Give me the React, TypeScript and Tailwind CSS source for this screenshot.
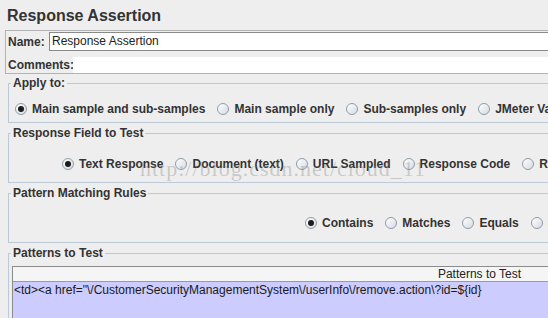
import type { ReactNode } from 'react';

const Radio = ({ checked }: { checked?: boolean }) => (
  <span className="w-[12px] h-[12px] rounded-full border border-[#8e9cab] bg-linear-to-br from-white to-[#d6dbe1] flex items-center justify-center shrink-0">
    {checked && <span className="w-[6px] h-[6px] rounded-full bg-[#1c1c1c]" />}
  </span>
);

const Option = ({ label, checked }: { label: string; checked?: boolean }) => (
  <label className="flex items-center gap-[5px] whitespace-nowrap">
    <Radio checked={checked} />
    <span>{label}</span>
  </label>
);

const Group = ({ title, className, children }: { title: string; className: string; children: ReactNode }) => (
  <fieldset className="ml-[8px] w-[950px] border border-[#bccad8]">
    <legend className="ml-[2px] px-[2px] text-[12px] leading-[14px] font-bold">{title}</legend>
    <div className={className}>{children}</div>
  </fieldset>
);

const App = () => {
  return (
    <div className="relative w-[548px] h-[318px] overflow-hidden bg-[#eeeeee] text-[#333333] font-['Liberation_Sans',Arial,sans-serif]">
      {/* header */}
      <div className="h-[30px] pl-[7px] pt-[6px] text-[16px] leading-[20px] font-bold">Response Assertion</div>

      {/* name / comments */}
      <div className="ml-[5px] w-[960px] border border-[#b3b3b3] pt-[1px] pl-[2px] text-[12px] font-bold">
        <div className="flex items-center h-[19px]">
          <span className="w-[41px]">Name:</span>
          <div className="flex-1 h-[19px] border border-[#8a8a8a] bg-white pl-[2px] leading-[17px] font-normal text-[#222]">
            Response Assertion
          </div>
        </div>
        <div className="flex items-center h-[16px] mt-[6px]">
          <span className="w-[65px]">Comments:</span>
          <div className="flex-1 h-[16px] bg-white" />
        </div>
      </div>

      <div className="mt-[2px] flex flex-col gap-[3px] text-[12px] font-bold">
        <Group title="Apply to:" className="pt-[12px] pb-[6px] pl-[6px]">
          <div className="flex items-center h-[14px] gap-[12px]">
            <Option label="Main sample and sub-samples" checked />
            <Option label="Main sample only" />
            <Option label="Sub-samples only" />
            <Option label="JMeter Variable" />
          </div>
        </Group>

        <Group title="Response Field to Test" className="pt-[17px] pb-[11px] pl-[53px]">
          <div className="flex items-center h-[14px] gap-[12px]">
            <Option label="Text Response" checked />
            <Option label="Document (text)" />
            <Option label="URL Sampled" />
            <Option label="Response Code" />
            <Option label="Response Message" />
          </div>
        </Group>

        <Group title="Pattern Matching Rules" className="pt-[16px] pb-[12px] pl-[296px]">
          <div className="flex items-center h-[14px] gap-[12px]">
            <Option label="Contains" checked />
            <Option label="Matches" />
            <Option label="Equals" />
            <Option label="Substring" />
            <Option label="Not" />
          </div>
        </Group>

        <Group title="Patterns to Test" className="pt-[6px] pl-[3px] h-[80px]">
          <div className="w-[935px] border border-[#8c8c8c] font-normal">
            <div className="h-[15px] bg-[#f5f5f5] border-b border-[#9a9a9a] text-center leading-[15px] text-[#222]">
              Patterns to Test
            </div>
            <div className="h-[60px] bg-[#ccccff] pl-[1px] pt-[1px] leading-[14px] text-[#1a1a1a] whitespace-nowrap">
              {'<td><a href="\\/CustomerSecurityManagementSystem\\/userInfo\\/remove.action\\?id=${id}'}
            </div>
          </div>
        </Group>
      </div>

      {/* blog watermark */}
      <div className="absolute left-[140px] top-[158px] z-10 pointer-events-none text-[22px] leading-[22px] tracking-[1px] text-[rgba(130,130,130,0.35)] font-['Liberation_Serif',serif]">
        http://blog.csdn.net/cloud_11
      </div>
    </div>
  );
};

export default App;
